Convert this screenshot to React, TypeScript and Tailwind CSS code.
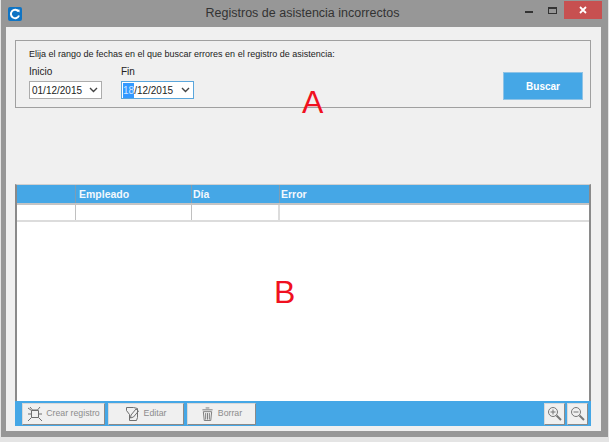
const font = { fontFamily: '"Liberation Sans", Arial, sans-serif' };

function Chevron() {
  return (
    <svg width="9" height="6" viewBox="0 0 9 6" className="ml-auto mr-[3px]">
      <path d="M1 1l3.5 3.5L8 1" fill="none" stroke="#444" strokeWidth="1.4" />
    </svg>
  );
}

function AppLogo() {
  return (
    <svg width="14" height="14" viewBox="0 0 14 14" className="ml-[7px] shrink-0">
      <rect width="14" height="14" rx="2" fill="#0f74c4" />
      <path d="M10.5 4.5A4.2 4.2 0 1 0 11 8.5" fill="none" stroke="#fff" strokeWidth="2" />
      <path d="M8.5 3l3-0.5v3z" fill="#fff" />
    </svg>
  );
}

function CreateIcon() {
  return (
    <svg width="16" height="16" viewBox="0 0 16 16" fill="none" stroke="#6f6f6f" strokeWidth="1" className="shrink-0">
      <path d="M3 1l2.5 3h5L13 1M4.5 4.5h7v7h-7zM1 8h3.5M11.5 8H15M1 15l3.5-3.5M15 15l-3.5-3.5M1 2l3.5 2.5" />
    </svg>
  );
}

function EditIcon() {
  return (
    <svg width="14" height="15" viewBox="0 0 14 15" fill="none" stroke="#6f6f6f" strokeWidth="1" className="shrink-0">
      <path d="M0.5 1.5h7l4 1v9l-1 3h-7v-6l-3-4zM5 9l5-6 2.5 2-5 6-3 1z" />
    </svg>
  );
}

function TrashIcon() {
  return (
    <svg width="13" height="16" viewBox="0 0 14 16" fill="none" stroke="#777" strokeWidth="1" className="shrink-0">
      <path d="M5 1.5h4M1.5 3.5h11M2.5 5.5h9l-1 9.5h-7zM5 7v7M7 7v7M9 7v7" />
    </svg>
  );
}

function ZoomIcon({ plus }: { plus?: boolean }) {
  return (
    <svg width="15" height="15" viewBox="0 0 15 15" fill="none" stroke="#777">
      <circle cx="6" cy="6" r="4.5" />
      <path d="M3.5 6h5" />
      {plus && <path d="M6 3.5v5" />}
      <path d="M9.5 9.5L14 14" strokeWidth="2" />
    </svg>
  );
}

function ToolButton({ icon, label, width, gap }: { icon: React.ReactNode; label: string; width: string; gap: string }) {
  return (
    <button
      className={`${width} ${gap} h-[22px] flex items-center justify-center whitespace-nowrap bg-[#f0f0f0] border border-[#d8d8d8] border-r-[#8a8a8a] border-b-[#8a8a8a] text-[8.75px] text-[#8c8c8c]`}
    >
      {icon}
      <span>{label}</span>
    </button>
  );
}

export default function App() {
  return (
    <div className="relative w-[609px] h-[442px] overflow-hidden bg-[#e4e4e4]" style={font}>
      {/* Ventana */}
      <div className="w-[607px] h-[437px] ml-[1px] bg-[#979797] flex flex-col">
        <div className="h-[27px] flex items-center shrink-0">
          <AppLogo />
          <div className="flex-1 text-center text-[12.5px] text-[#333] pl-[66px]">
            Registros de asistencia incorrectos
          </div>
          <div className="flex items-start self-start mr-[6px] mt-[1px]">
            <div className="w-[24px] h-[18px] flex items-center justify-center">
              <div className="w-[8px] h-[2px] bg-[#333] mt-[3px]" />
            </div>
            <div className="w-[23px] h-[18px] flex items-center justify-center">
              <div className="w-[9px] h-[7px] border border-[#333] border-t-2" />
            </div>
            <div className="w-[38px] h-[18px] bg-[#c75050] flex items-center justify-center">
              <svg width="8" height="8" viewBox="0 0 8 8">
                <path d="M1 1l6 6M7 1L1 7" stroke="#fff" strokeWidth="1.8" />
              </svg>
            </div>
          </div>
        </div>

        {/* Contenido */}
        <div className="ml-[5px] w-[595px] h-[404px] bg-[#f0f0f0] pt-[13px] pl-[9px] pr-[10px] flex flex-col">
          <div className="h-[68px] border border-[#a0a0a0] flex justify-between shrink-0">
            <div className="pl-[13px] pt-[7px]">
              <div className="text-[9px] leading-[12px] text-[#222]">
                Elija el rango de fechas en el que buscar errores en el registro de asistencia:
              </div>
              <div className="flex gap-[19px] mt-[6px]">
                <div>
                  <div className="text-[10px] leading-[12px] text-[#222]">Inicio</div>
                  <div className="mt-[3px] w-[73px] h-[18px] bg-white border border-[#acacac] flex items-center pl-[2px] text-[10px] text-[#222]">
                    01/12/2015
                    <Chevron />
                  </div>
                </div>
                <div>
                  <div className="text-[10px] leading-[12px] text-[#222]">Fin</div>
                  <div className="mt-[3px] w-[73px] h-[18px] bg-white border border-[#5aa6dc] flex items-center pl-[1px] text-[10px] text-[#222]">
                    <span className="bg-[#3399ff] text-[#cfe6ff]">18</span>/12/2015
                    <Chevron />
                  </div>
                </div>
              </div>
            </div>
            <button className="w-[80px] h-[28px] mt-[31px] mr-[7px] bg-[#45a7e6] border border-[#8fc3e6] text-white text-[10px] font-bold">
              Buscar
            </button>
          </div>

          {/* Tabla */}
          <div className="mt-[76px] h-[217px] shrink-0 flex flex-col border-l-2 border-r-2 border-[#8a8a8a] border-t border-t-[#d0d0d0] bg-white">
            <div className="h-[18px] bg-[#45a7e6] border-b-2 border-[#c4c4c4] flex box-content text-[10.5px] font-bold text-[#f2f8fd] shrink-0">
              <div className="w-[59px] border-r border-[#7f9db3]" />
              <div className="w-[116px] border-r border-[#7f9db3] pl-[3px] leading-[18px]">Empleado</div>
              <div className="w-[88px] border-r border-[#7f9db3] pl-[1px] leading-[18px]">Día</div>
              <div className="flex-1 pl-[1px] leading-[18px]">Error</div>
            </div>
            <div className="h-[17px] border-b-2 border-[#dcdcdc] flex shrink-0">
              <div className="w-[59px] border-r border-[#c0c0c0]" />
              <div className="w-[116px] border-r border-[#c0c0c0]" />
              <div className="w-[88px] border-r-2 border-[#dcdcdc]" />
            </div>
          </div>

          {/* Barra de herramientas */}
          <div className="h-[25px] shrink-0 bg-[#45a7e6] flex items-center pl-[7px] pr-[3px] gap-[3px]">
            <ToolButton icon={<CreateIcon />} label="Crear registro" width="w-[83px]" gap="gap-[3px]" />
            <ToolButton icon={<EditIcon />} label="Editar" width="w-[76px]" gap="gap-[4px]" />
            <ToolButton icon={<TrashIcon />} label="Borrar" width="w-[69px]" gap="gap-[4px]" />
            <button className="ml-auto w-[21px] h-[22px] flex items-center justify-center bg-[#f0f0f0] border border-[#d8d8d8] border-r-[#8a8a8a] border-b-[#8a8a8a]">
              <ZoomIcon plus />
            </button>
            <button className="-ml-[1px] w-[21px] h-[22px] flex items-center justify-center bg-[#f0f0f0] border border-[#d8d8d8] border-r-[#8a8a8a] border-b-[#8a8a8a]">
              <ZoomIcon />
            </button>
          </div>
        </div>
      </div>

      {/* Anotaciones */}
      <div className="absolute left-[302px] top-[84px] text-[32px] leading-[36px] text-[#f01020]">A</div>
      <div className="absolute left-[274px] top-[274px] text-[32px] leading-[36px] text-[#f01020]">B</div>
    </div>
  );
}
